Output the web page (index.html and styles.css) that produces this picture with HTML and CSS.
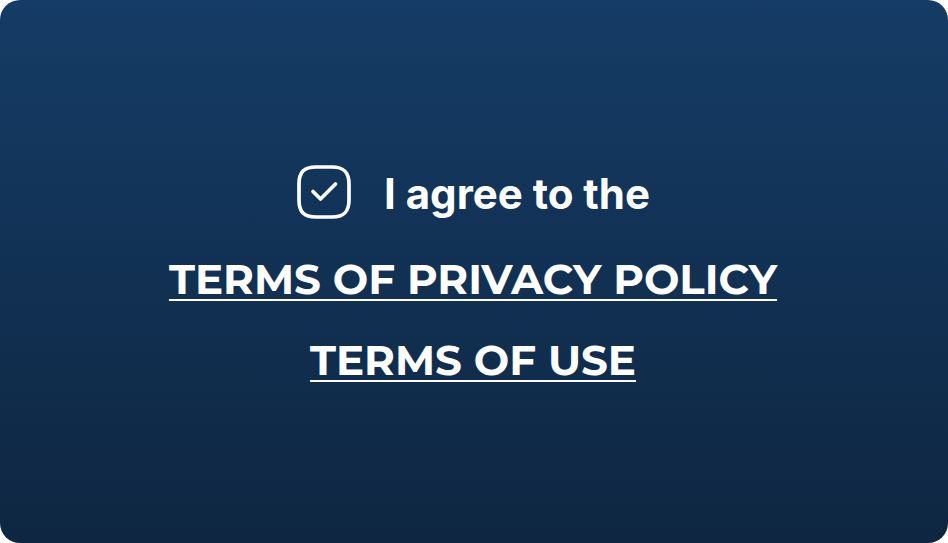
FILE: index.html
```html
<!DOCTYPE html>
<html lang="en">
<head>
<meta charset="utf-8">
<title>Terms agreement</title>
<link rel="stylesheet" href="styles.css">
</head>
<body>
<main class="card">
  <label class="agree">
    <span class="check">
      <input class="check-input" type="checkbox" checked>
      <svg class="check-icon" viewBox="0 0 56 56" aria-hidden="true">
        <path class="check-frame" d="M20 3H36C48 3 53 8 53 20V36C53 48 48 53 36 53H20C8 53 3 48 3 36V20C3 8 8 3 20 3Z"/>
        <path class="check-mark" d="M17 27.500L24.500 35L39.500 20"/>
      </svg>
    </span>
    <span class="agree-text">I agree to the</span>
  </label>
  <a class="link" href="#privacy">TERMS OF PRIVACY POLICY</a>
  <a class="link" href="#use">TERMS OF USE</a>
</main>
</body>
</html>
```
FILE: styles.css
```css
* {
  box-sizing: border-box;
}

body {
  margin: 0;
  background: #fff;
  color: #fff;
  font-family: Inter, "Liberation Sans", sans-serif;
}

.card {
  min-height: 100vh;
  display: flex;
  flex-direction: column;
  align-items: center;
  justify-content: center;
  gap: 33px;
  padding: 4px 2px 0 0;
  border-radius: 20px;
  background: linear-gradient(#153c66, #0e2641);
}

.agree {
  display: flex;
  align-items: center;
  gap: 32px;
  margin-bottom: 2px;
  cursor: pointer;
}

.check {
  display: grid;
  width: 56px;
  height: 56px;
}

.check-input,
.check-icon {
  grid-area: 1 / 1;
  width: 56px;
  height: 56px;
  margin: 0;
}

.check-input {
  appearance: none;
}

.check-icon {
  pointer-events: none;
  fill: none;
  stroke: #fff;
  stroke-width: 3.7;
  stroke-linecap: round;
  stroke-linejoin: round;
}

.check-mark {
  visibility: hidden;
}

.check-input:checked + .check-icon .check-mark {
  visibility: visible;
}

.agree-text {
  padding-top: 4px;
  font-size: 42px;
  line-height: 48px;
  font-weight: 700;
}

.link {
  color: inherit;
  font-family: Montserrat, Inter, sans-serif;
  font-size: 42px;
  line-height: 48px;
  font-weight: 700;
  text-decoration: underline;
  text-decoration-thickness: 2px;
  text-underline-offset: 5px;
}
```
